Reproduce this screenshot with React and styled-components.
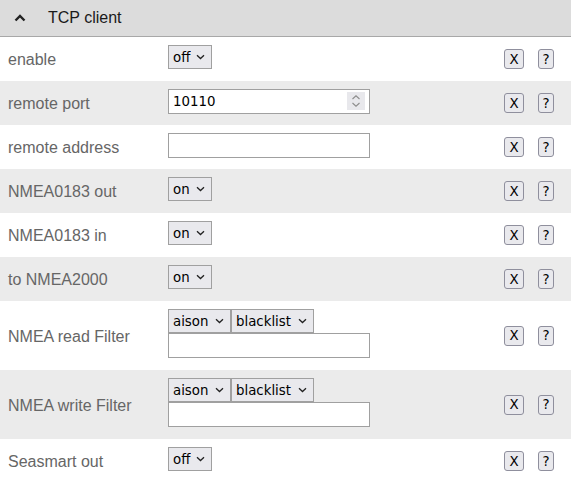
import React, { useState } from 'react'
import styled, { createGlobalStyle } from 'styled-components'

const GlobalStyle = createGlobalStyle`
body {
    margin:0;
    background:white;
    font-family:"Liberation Sans", Arial, sans-serif;
}
input[type=number]::-webkit-inner-spin-button,
input[type=number]::-webkit-outer-spin-button {
    -webkit-appearance:none;
    margin:0;
}
`

const arrow = "url(\"data:image/svg+xml;utf8,<svg xmlns='http://www.w3.org/2000/svg' width='9' height='6' viewBox='0 0 9 6'><path d='M1 1.2 L4.5 4.5 L8 1.2' fill='none' stroke='%23222' stroke-width='1.3'/></svg>\")"

const rows = [
    { label: 'enable', kind: 'select', value: 'off' },
    { label: 'remote port', kind: 'number', value: '10110' },
    { label: 'remote address', kind: 'text', value: '' },
    { label: 'NMEA0183 out', kind: 'select', value: 'on' },
    { label: 'NMEA0183 in', kind: 'select', value: 'on' },
    { label: 'to NMEA2000', kind: 'select', value: 'on' },
    { label: 'NMEA read Filter', kind: 'filter' },
    { label: 'NMEA write Filter', kind: 'filter' },
    { label: 'Seasmart out', kind: 'select', value: 'off' },
]

function Field({ row }) {
    if (row.kind === 'select') {
        return (
            <Select defaultValue={row.value}>
                <option value="on">on</option>
                <option value="off">off</option>
            </Select>
        )
    }
    if (row.kind === 'number') {
        return (
            <NumberWrap>
                <TextInput type="number" defaultValue={row.value} />
                <Spinner>
                    <svg width="18" height="18" viewBox="0 0 18 18">
                        <path d="M5.5 7 L9 3.8 L12.5 7" fill="none" stroke="#8c8c8c" strokeWidth="1.1" />
                        <path d="M5.5 11 L9 14.2 L12.5 11" fill="none" stroke="#8c8c8c" strokeWidth="1.1" />
                    </svg>
                </Spinner>
            </NumberWrap>
        )
    }
    if (row.kind === 'text') {
        return <TextInput type="text" defaultValue={row.value} />
    }
    return (
        <FilterBox>
            <div>
                <Select defaultValue="aison">
                    <option value="aison">aison</option>
                    <option value="aisoff">aisoff</option>
                </Select>
                <Select defaultValue="blacklist">
                    <option value="blacklist">blacklist</option>
                    <option value="whitelist">whitelist</option>
                </Select>
            </div>
            <TextInput type="text" />
        </FilterBox>
    )
}

function App() {
    const [open, setOpen] = useState(true)
    return (
        <Container>
            <GlobalStyle />
            <Header onClick={() => setOpen(!open)}>
                <Chevron>
                    <svg width="12" height="8" viewBox="0 0 12 8">
                        <path d="M1.5 6.5 L6 2 L10.5 6.5" fill="none" stroke="#222" strokeWidth="2.4" />
                    </svg>
                </Chevron>
                <span>TCP client</span>
            </Header>
            {open && rows.map((row, i) => (
                <Row key={row.label} $odd={i % 2 === 1} $tall={row.kind === 'filter'}>
                    <Label>{row.label}</Label>
                    <Value>
                        <Field row={row} />
                    </Value>
                    <Buttons>
                        <SmallButton>X</SmallButton>
                        <SmallButton $narrow>?</SmallButton>
                    </Buttons>
                </Row>
            ))}
        </Container>
    )
}

export default App

const Container = styled.div`
width:571px;
`
const Header = styled.div`
display:flex;
align-items:center;
height:36px;
background-color:#dcdcdc;
border-bottom:1px solid #a8a8a8;
cursor:pointer;
font-size:16px;
color:#1a1a1a;
span{
    margin-left:22px;
}
`
const Chevron = styled.div`
display:flex;
margin-left:14px;
`
const Row = styled.div`
display:flex;
align-items:center;
height:${props => props.$tall ? '69px' : '44px'};
background-color:${props => props.$odd ? '#ebebeb' : 'white'};
`
const Label = styled.div`
width:160px;
padding-left:8px;
padding-top:2px;
font-size:16px;
color:#666;
`
const Value = styled.div`
flex:1;
align-self:flex-start;
display:flex;
padding-top:8px;
`
const FilterBox = styled.div`
display:flex;
flex-direction:column;
div{
    display:flex;
}
`
const Select = styled.select`
appearance:none;
font-family:"DejaVu Sans", sans-serif;
font-size:13.33px;
height:24px;
padding:0 20px 0 4px;
margin:0;
background:#e9e9ed ${arrow} no-repeat right 6px center;
color:black;
border:1px solid #a0a0a0;
border-radius:0;
`
const NumberWrap = styled.div`
position:relative;
display:flex;
`
const Spinner = styled.span`
position:absolute;
top:3px;
right:5px;
display:flex;
background-color:#e8e8ec;
`
const TextInput = styled.input`
box-sizing:border-box;
font-family:"DejaVu Sans", sans-serif;
font-size:13.33px;
width:202px;
height:25px;
padding:1px 4px;
margin:0;
border:1px solid #a0a0a0;
border-radius:0;
`
const Buttons = styled.div`
display:flex;
gap:14px;
margin-right:17px;
`
const SmallButton = styled.button`
box-sizing:border-box;
width:${props => props.$narrow ? '16px' : '20px'};
height:20px;
padding:0;
font-family:"DejaVu Sans", sans-serif;
font-size:13.33px;
color:black;
background-color:#e9e9ed;
border:1px solid #8f8f9d;
border-radius:3px;
`
